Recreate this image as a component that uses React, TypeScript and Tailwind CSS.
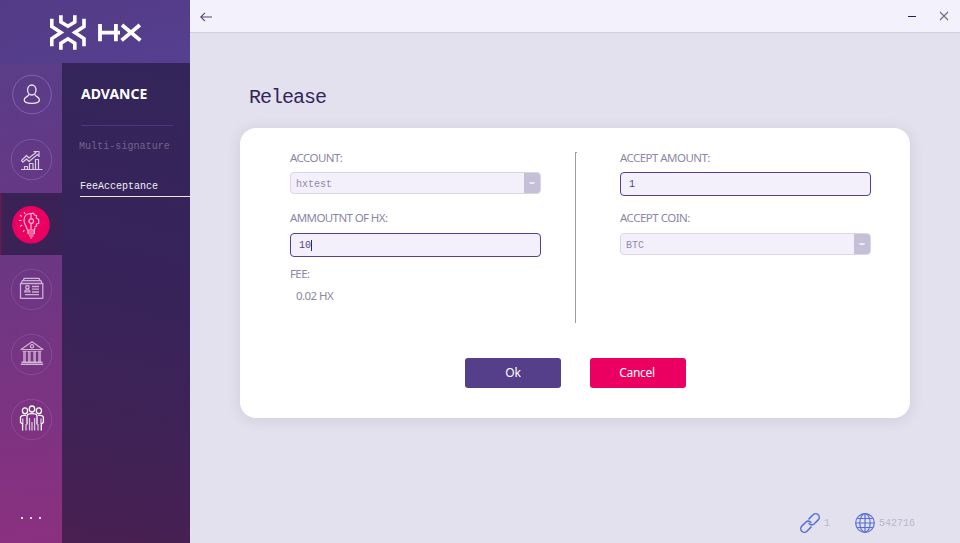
import type { ReactNode } from "react";

const MONO = "font-['Liberation_Mono',monospace]";
const SANS = "font-['Noto_Sans',sans-serif]";

function Logo() {
  return (
    <svg className="h-[63px] w-[190px]" viewBox="0 0 190 63" fill="none" stroke="#fff">
      <g strokeWidth="3.6">
        <path d="M60.9 15.2V22L67.9 26.2L74.8 22V15.2" />
        <path d="M60.9 49.8V43.2L67.9 38.8L74.8 43.2V49.8" />
        <path d="M51.8 18.8V26.4L61 32.4L51.8 38.6V46.2" />
        <path d="M84 18.8V26.4L74.8 32.4L84 38.6V46.2" />
      </g>
      <g strokeWidth="3.8">
        <path d="M100 24V41.2M115.9 24V41.2M100 32.7H120" />
        <path d="M122 25L140.4 40.4M139.8 25L121.6 40.4" strokeWidth="3.8" />
      </g>
    </svg>
  );
}

function NavCell({ children, active }: { children: ReactNode; active?: boolean }) {
  return (
    <div
      className={
        active
          ? "h-[62px] w-[62px] bg-[linear-gradient(90deg,#7a1858_0px,#48204f_1.5px,#3a2256_4px,#3a2256_100%)]"
          : "h-[62px] w-[62px]"
      }
    >
      <svg className="h-[62px] w-[62px]" viewBox="0 0 62 62" fill="none" strokeLinejoin="round">
        {children}
      </svg>
    </div>
  );
}

function Ring({ r = 20.2, cx = 31.5, o = 0.2 }: { r?: number; cx?: number; o?: number }) {
  return <circle cx={cx} cy="31.5" r={r} stroke="#b9a0e6" strokeOpacity={o + 0.08} />;
}

function NavIcons() {
  return (
    <nav className="flex flex-col gap-[3px]">
      <NavCell>
        <Ring r={19.3} cx={32} o={0.3} />
        <g stroke="#f0e9f6" strokeWidth="1.3">
          <ellipse cx="31.8" cy="27" rx="4.2" ry="5" />
          <path d="M29 31.2C29 33.8 24.2 33.5 24.2 37C24.2 41.6 39.4 41.6 39.4 37C39.4 33.5 34.8 33.8 34.8 31.2" />
        </g>
      </NavCell>
      <NavCell>
        <Ring />
        <g stroke="#dccbe3" strokeWidth="1.2">
          <path d="M21 41.5H42.5M24.5 41V38.5H27.5V41M29.5 41V35.5H33V41M35.5 41V31.5H38.5V41" />
          <path d="M21.5 32.5L26.5 27.5L29 30L36 24.5L34 23.5H39V28.5L37.5 26.5L29 33.5L26.5 31L22.8 34.2Z" />
        </g>
      </NavCell>
      <NavCell active>
        <circle cx="31" cy="31.8" r="18.8" fill="#eb0061" />
        <g stroke="#fbb9d3" strokeWidth="1.2">
          <path d="M31 20.5C26.5 20.5 24 23.5 24 27.4C24 31 26.8 33 27.3 37H34.5L34.9 34.5" />
          <path d="M31 20.5V25.8M31 30.4V36.5M31 20.5L33.5 20.2L34.5 22L36.6 22.6L36.3 25L38.7 26.5V30.5L36.3 31L36.6 33L34.5 34" />
          <circle cx="31.3" cy="28.1" r="2.3" />
          <path d="M28 39H34.5M28.3 41H34.2M29 43H33.5M30.2 45H32.2M28 37V41M34.4 37V41" />
          <path d="M24 19.2L25.3 21M20 22.2L22 23.5M18.8 27.5H21.5M20 33.4L22.2 32M23 39L24.4 37.2" />
        </g>
      </NavCell>
      <NavCell>
        <Ring o={0.12} />
        <g stroke="#cdb0d5" strokeWidth="1.3">
          <path d="M20.5 25.5H42.8V40.3H20.5ZM21.5 25L22.3 22.6H41L41.8 25M23.5 22.5L24 20.3H39.2L39.8 22.5" />
          <path d="M32 28.5H39M32 31.2H39M32 34H39M25 36.6H39" />
          <path d="M24.7 33.9L25.3 32.3L27.3 31.6L29.3 32.3L30 33.9Z" />
          <circle cx="27.4" cy="29.2" r="1.7" />
        </g>
      </NavCell>
      <NavCell>
        <Ring o={0.12} />
        <g stroke="#d2b2d3" strokeWidth="1.2">
          <path d="M21 26.5L32 18.8L43 26.5Z" />
          <circle cx="32" cy="23.2" r="1.6" />
          <path d="M21.5 39.3H42.5M20.8 41.2H43.2" strokeWidth="1.5" />
          <path d="M22.5 28.3H41.5" strokeWidth="0.8" />
          <path d="M24.5 28V39M29.3 28V39M34.6 28V39M39.6 28V39" strokeWidth="2.8" strokeOpacity="0.75" />
        </g>
      </NavCell>
      <NavCell>
        <Ring o={0.12} />
        <g stroke="#fff" strokeWidth="1.3">
          <ellipse cx="32" cy="21" rx="2.7" ry="3" />
          <ellipse cx="25" cy="22.8" rx="2.6" ry="2.9" />
          <ellipse cx="38.9" cy="22.8" rx="2.6" ry="2.9" />
          <path d="M27 36.5V27.5C28 25 36 25 37 27.5V36.5M22.6 42.5V36L20.5 34.5V29.5C20.5 27.5 22.5 27.2 26 27.2M41.3 42.5V36L43.4 34.5V29.5C43.4 27.5 41.5 27.2 38 27.2" />
          <path d="M22.8 30.5V36M41 30.5V36M29.5 30V42.5M34.6 30V42.5M32 34V42.5M26 36V42.5M38 36V42.5" strokeOpacity="0.7" />
        </g>
      </NavCell>
    </nav>
  );
}

function Select({ value }: { value: string }) {
  return (
    <div className="flex h-[22px] w-[251px] overflow-hidden rounded-[4px] border border-[#d9d6e6] bg-[#f3f0fb]">
      <span className={`${MONO} flex-1 pt-px pl-[5px] text-[10px] leading-[21px] text-[#928aaa]`}>{value}</span>
      <span className="flex w-4 items-center justify-center bg-[#c5bfd8]">
        <svg width="6" height="3" viewBox="0 0 6 3">
          <path d="M0 .2H6V1L4 2H2L0 1Z" fill="#f6f4fb" />
        </svg>
      </span>
    </div>
  );
}

function Input({ value, caret }: { value: string; caret?: boolean }) {
  return (
    <div className="flex h-[24px] w-[251px] items-center rounded-[4px] border border-[#563f8d] bg-[#f3f0fb] pl-[8px]">
      <span className={`${MONO} pt-[2px] text-[10px] leading-[20px] text-[#54428c]`}>{value}</span>
      {caret && <span className="h-[11px] w-px bg-[#33245b]" />}
    </div>
  );
}

function Label({ children, className }: { children: ReactNode; className: string }) {
  return (
    <div className={`${SANS} h-4 whitespace-nowrap text-[11.5px] leading-4 text-[#8d86a6] ${className}`}>{children}</div>
  );
}

export default function App() {
  return (
    <div className="flex h-[543px] w-[960px] overflow-hidden bg-[#e3e1ed]">
      <aside className="flex w-[190px] flex-col">
        <header className="h-[63px] bg-[linear-gradient(165deg,#543b86,#553f8f)]">
          <Logo />
        </header>
        <div className="flex flex-1">
          <div className="flex w-[62px] flex-col justify-between bg-[linear-gradient(175deg,#5a3d88_0%,#643884_25%,#753582_60%,#8b3080_100%)]">
            <NavIcons />
            <div className="mb-[24px] flex gap-[7px] pl-[21px]">
              <i className="size-[2px] bg-[#f0e2ef]" />
              <i className="size-[2px] bg-[#f0e2ef]" />
              <i className="size-[2px] bg-[#f0e2ef]" />
            </div>
          </div>
          <div className="flex w-[128px] flex-col bg-[linear-gradient(192deg,#33255a_0%,#382359_50%,#3f2256_75%,#492051_100%)]">
            <h2 className={`${SANS} mt-[21px] ml-[19px] h-5 text-[14px] leading-5 font-bold tracking-[0.02px] text-white`}>
              ADVANCE
            </h2>
            <div className="mt-[21px] ml-[19px] h-px w-[92px] bg-[#4b3882]" />
            <div className={`${MONO} mt-[13px] ml-[17px] h-4 text-[10px] leading-4 tracking-[0.06px] text-[#72628e]`}>
              Multi-signature
            </div>
            <div
              className={`${MONO} mt-[24px] ml-[18px] h-[18px] border-b border-[#eeeaf5] text-[10px] leading-4 text-[#f3effa]`}
            >
              FeeAcceptance
            </div>
          </div>
        </div>
      </aside>

      <main className="flex flex-1 flex-col">
        <div className="flex h-[33px] items-center justify-between border-b border-[#d3d0e2] bg-[#f3f1fb] pr-[11px] pl-[10px]">
          <svg width="12" height="10" viewBox="0 0 12 10" fill="none" stroke="#4f4672" strokeWidth="1.1" className="mt-px">
            <path d="M0.7 5H12M5 0.8L0.7 5L5 9.2" />
          </svg>
          <div className="flex items-center gap-[23px]">
            <span className="h-px w-2 bg-[#2b1b60]" />
            <svg width="10" height="10" viewBox="0 0 10 10" fill="none" stroke="#726b8e" strokeWidth="1.1">
              <path d="M1 1L9 9M9 1L1 9" />
            </svg>
          </div>
        </div>

        <h1 className={`${MONO} mt-[53px] ml-[59px] h-6 text-[20px] leading-6 tracking-[-1px] text-[#33245b]`}>Release</h1>

        <section className="mt-[18px] ml-[50px] flex h-[290px] w-[670px] flex-col rounded-[16px] bg-white shadow-[0_2px_14px_rgba(90,80,130,0.14)]">
          <div className="flex h-[195px] pt-[22px] pl-[50px]">
            <div className="w-[285px]">
              <Label className="tracking-[-0.56px]">ACCOUNT:</Label>
              <div className="mt-[6px]">
                <Select value="hxtest" />
              </div>
              <Label className="mt-[16px] tracking-[-0.6px]">AMMOUTNT OF HX:</Label>
              <div className="mt-[7px]">
                <Input value="10" caret />
              </div>
              <Label className="mt-[9px] tracking-[-0.6px]">FEE:</Label>
              <Label className="mt-[6px] ml-[6px] tracking-[-0.55px]">0.02 HX</Label>
            </div>
            <div className="mt-[2px] h-[171px] w-[2px] border-t border-l border-[#9c9ca0]" />
            <div className="ml-[43px]">
              <Label className="tracking-[-0.55px]">ACCEPT AMOUNT:</Label>
              <div className="mt-[6px]">
                <Input value="1" />
              </div>
              <Label className="mt-[14px] tracking-[-0.5px]">ACCEPT COIN:</Label>
              <div className="mt-[7px]">
                <Select value="BTC" />
              </div>
            </div>
          </div>
          <div className={`${SANS} mt-[35px] ml-[225px] flex gap-[29px] text-[12px] leading-[30px] text-white`}>
            <button className="h-[30px] w-[96px] rounded-[3px] bg-[#563f8a] tracking-[-0.2px]">Ok</button>
            <button className="h-[30px] w-[96px] rounded-[3px] bg-[#eb0061] pr-[2px] tracking-[-0.3px]">Cancel</button>
          </div>
        </section>

        <footer className={`${MONO} mt-auto mb-[9px] flex h-[22px] items-center pl-[609px] text-[10px] text-[#b9b7ce]`}>
          <svg width="22" height="22" viewBox="0 0 22 22" fill="none" stroke="#566fdc" strokeWidth="1.5">
            <g transform="translate(11 11) rotate(-45)">
              <path d="M-1.5 3.6H-8A3.6 3.6 0 0 1 -8 -3.6H-2.5Q1.2 -3.4 1.2 0.8" />
              <path d="M1.5 -3.6H8A3.6 3.6 0 0 1 8 3.6H2.5Q-1.2 3.4 -1.2 -0.8" />
            </g>
          </svg>
          <span className="ml-[3px] pt-px">1</span>
          <svg className="ml-[25px]" width="20" height="20" viewBox="0 0 20 20" fill="none" stroke="#566fdc" strokeWidth="1.2">
            <circle cx="10" cy="10" r="9.3" />
            <ellipse cx="10" cy="10" rx="5.2" ry="9.3" />
            <path d="M10 .7V19.3M.7 10H19.3M2.4 5.5H17.6M2.4 14.5H17.6" />
          </svg>
          <span className="ml-[4px] pt-px">542716</span>
        </footer>
      </main>
    </div>
  );
}
